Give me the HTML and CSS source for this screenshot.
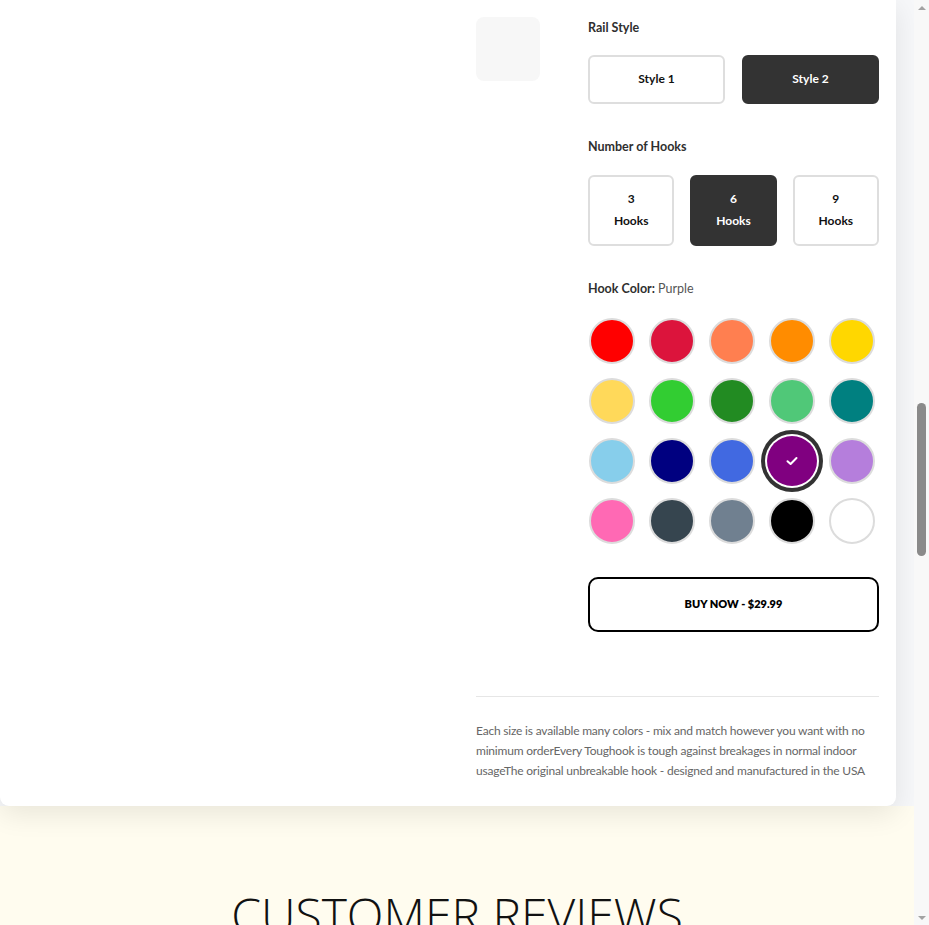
FILE: index.html
```html
<!DOCTYPE html>
<html lang="en">
<head>
<meta charset="utf-8">
<title>Toughook – Product</title>
<link rel="stylesheet" href="styles.css">
</head>
<body>
<div class="window">
  <div class="viewport">
    <section class="product-section">
      <div class="product-card">
        <div class="gallery"></div>
        <div class="info">
          <div class="info-top">
            <div class="thumbs">
              <div class="thumb"></div>
            </div>
            <div class="options">
              <div class="group">
                <div class="label">Rail Style</div>
                <div class="style-grid">
                  <button class="opt">Style 1</button>
                  <button class="opt active">Style 2</button>
                </div>
              </div>
              <div class="group group-hooks">
                <div class="label">Number of Hooks</div>
                <div class="hook-grid">
                  <button class="opt tall"><span>3</span><span>Hooks</span></button>
                  <button class="opt tall active"><span>6</span><span>Hooks</span></button>
                  <button class="opt tall"><span>9</span><span>Hooks</span></button>
                </div>
              </div>
              <div class="group group-colors">
                <div class="label"><b>Hook Color:</b> <span class="value">Purple</span></div>
                <div class="swatches">
                  <span class="sw" style="background:#ff0000"></span>
                  <span class="sw" style="background:#dc143c"></span>
                  <span class="sw" style="background:#ff7f50"></span>
                  <span class="sw" style="background:#ff8c00"></span>
                  <span class="sw" style="background:#ffd700"></span>
                  <span class="sw" style="background:#ffd95a"></span>
                  <span class="sw" style="background:#32cd32"></span>
                  <span class="sw" style="background:#228b22"></span>
                  <span class="sw" style="background:#50c878"></span>
                  <span class="sw" style="background:#008080"></span>
                  <span class="sw" style="background:#87ceeb"></span>
                  <span class="sw" style="background:#000080"></span>
                  <span class="sw" style="background:#4169e1"></span>
                  <span class="sw selected" style="background:#800080">
                    <svg viewBox="0 0 12 10" width="12" height="10"><polyline points="1.5,5.2 4.6,8 10.5,2" fill="none" stroke="#fff" stroke-width="2" stroke-linecap="round" stroke-linejoin="round"/></svg>
                  </span>
                  <span class="sw" style="background:#b57edc"></span>
                  <span class="sw" style="background:#ff69b4"></span>
                  <span class="sw" style="background:#36454f"></span>
                  <span class="sw" style="background:#708090"></span>
                  <span class="sw" style="background:#000000"></span>
                  <span class="sw" style="background:#ffffff"></span>
                </div>
              </div>
              <button class="buy">BUY NOW - $29.99</button>
            </div>
          </div>
          <hr class="divider">
          <p class="desc">Each size is available many colors - mix and match however you want with no minimum orderEvery Toughook is tough against breakages in normal indoor usageThe original unbreakable hook - designed and manufactured in the USA</p>
        </div>
      </div>
    </section>
    <section class="reviews">
      <h2>CUSTOMER REVIEWS</h2>
    </section>
  </div>
  <div class="scrollbar">
    <div class="arrow up"></div>
    <div class="track"><div class="thumb-bar"></div></div>
    <div class="arrow down"></div>
  </div>
</div>
</body>
</html>
```
FILE: styles.css
```css
* { box-sizing: border-box; }
html, body { margin: 0; padding: 0; }
body {
  font-family: Lato, "Noto Sans", sans-serif;
  color: #333;
  background: #fff;
}
.window {
  display: flex;
  width: 929px;
  height: 925px;
  overflow: hidden;
}
.viewport {
  width: 914px;
  height: 925px;
  overflow: hidden;
  flex: none;
}
.product-section {
  background: #f6f7f9;
}
.product-card {
  position: relative;
  z-index: 1;
  width: 896px;
  height: 806px;
  background: #fff;
  border-radius: 0 0 9px 9px;
  box-shadow: 0 8px 28px rgba(0, 0, 0, 0.09);
  display: flex;
  gap: 16px;
}
.gallery { width: 460px; flex: none; }
.info { width: 403px; flex: none; }
.info-top { display: flex; }
.thumbs { width: 64px; flex: none; padding-top: 17px; }
.thumb {
  width: 64px;
  height: 64px;
  border-radius: 8px;
  background: #f7f7f7;
}
.options {
  margin-left: 48px;
  width: 291px;
  padding-top: 18px;
}
.label {
  font-size: 12.5px;
  line-height: 20px;
  font-weight: 700;
  color: #2f2f2f;
  margin-bottom: 17px;
}
.label b { font-weight: 700; }
.label .value { font-weight: 400; color: #555; }
.group-hooks { margin-top: 33px; }
.group-hooks .label { margin-bottom: 18px; }
.group-colors { margin-top: 33px; }
.group-colors .label { margin-bottom: 19px; }
.style-grid {
  display: grid;
  grid-template-columns: 1fr 1fr;
  gap: 17px;
}
.hook-grid {
  display: grid;
  grid-template-columns: 1fr 1fr 1fr;
  gap: 16px;
}
.opt {
  font-family: inherit;
  font-size: 12px;
  font-weight: 700;
  color: #111;
  background: #fff;
  border: 2px solid #dedede;
  border-radius: 6px;
  height: 49px;
  padding: 0 0 2px;
  display: flex;
  flex-direction: column;
  align-items: center;
  justify-content: center;
}
.opt.tall { height: 71px; line-height: 22px; }
.opt.active {
  background: #333;
  border-color: #333;
  color: #fff;
}
.swatches {
  display: grid;
  grid-template-columns: repeat(5, 46px);
  gap: 14px;
  padding-left: 1px;
}
.sw {
  width: 46px;
  height: 46px;
  border-radius: 50%;
  border: 2px solid #dcdcdc;
  display: flex;
  align-items: center;
  justify-content: center;
}
.sw.selected {
  border: none;
  width: 50px;
  height: 50px;
  margin: -2px;
  box-shadow: 0 0 0 2px #fff, 0 0 0 6px #333;
}
.buy {
  display: block;
  width: 291px;
  height: 55px;
  margin-top: 33px;
  padding: 0 0 2px;
  background: #fff;
  border: 2px solid #000;
  border-radius: 10px;
  font-family: inherit;
  font-size: 11px;
  font-weight: 800;
  color: #000;
}
.divider {
  margin: 64px 0 0;
  border: none;
  border-top: 1px solid #e6e6e6;
  height: 0;
}
.desc {
  margin: 24px 0 0;
  font-size: 12px;
  line-height: 20px;
  letter-spacing: -0.2px;
  color: #666;
}
.reviews {
  background: #fffcef;
  padding-top: 80px;
  height: 500px;
}
.reviews h2 {
  margin: 0;
  text-align: center;
  font-family: "Open Sans", Lato, sans-serif;
  font-weight: 300;
  font-size: 48px;
  line-height: 58px;
  color: #111;
  letter-spacing: 0;
}
.scrollbar {
  width: 15px;
  flex: none;
  background: #f8f8f8;
  display: flex;
  flex-direction: column;
}
.arrow {
  height: 15px;
  flex: none;
  display: flex;
  align-items: center;
  justify-content: center;
}
.arrow::before {
  content: "";
  width: 0;
  height: 0;
  border-left: 4px solid transparent;
  border-right: 4px solid transparent;
}
.arrow.up::before { border-bottom: 4px solid #a3a3a3; }
.arrow.down::before { border-top: 4px solid #a3a3a3; }
.track { flex: 1; padding-top: 388px; }
.thumb-bar {
  width: 9px;
  height: 153px;
  margin-left: 3px;
  border-radius: 5px;
  background: #8a8a8a;
}
```
